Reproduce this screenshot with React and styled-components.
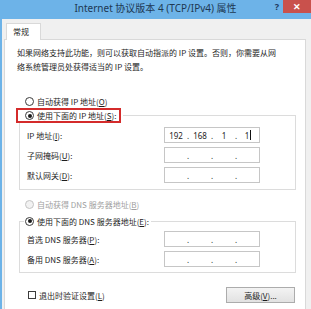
import React from "react";
import styled, { createGlobalStyle } from "styled-components";

const GlobalStyle = createGlobalStyle`
  html, body {
    margin: 0;
    padding: 0;
    background: #f0f0f0;
  }
  body {
    font-family: "Noto Sans CJK SC", "Noto Sans", sans-serif;
    font-size: 8px;
    color: #1e1e1e;
  }
  #root {
    width: 311px;
    height: 309px;
    overflow: hidden;
  }
`;

const Window = styled.div`
  width: 311px;
  height: 309px;
  display: flex;
  flex-direction: column;
  overflow: hidden;
  background: #f0f0f0;
`;

const TitleBar = styled.div`
  flex: none;
  height: 19px;
  display: grid;
  grid-template-columns: 1fr auto 1fr;
  align-items: start;
  background: #6db3e8;
`;

const Title = styled.div`
  grid-column: 2;
  font-family: "Noto Sans", "Noto Sans CJK SC", sans-serif;
  font-size: 10px;
  line-height: 17px;
  color: #203852;
  white-space: nowrap;
`;

const Controls = styled.div`
  grid-column: 3;
  justify-self: end;
  display: flex;
  align-items: flex-start;
`;

const HelpButton = styled.span`
  width: 10px;
  margin-right: 1px;
  font-family: "Noto Sans", sans-serif;
  font-weight: 700;
  font-size: 9px;
  line-height: 14px;
  color: #1d3a5e;
  text-align: center;
`;

const CloseButton = styled.span`
  width: 28px;
  height: 13px;
  background: #c9514c;
  color: #fff;
  font-family: "Noto Sans", sans-serif;
  font-weight: 700;
  font-size: 9px;
  line-height: 13px;
  text-align: center;
`;

const Body = styled.div`
  flex: 1;
  display: flex;
  flex-direction: column;
  border-left: 2px solid #6db3e8;
  padding: 0 5px 0 2px;
  min-height: 0;
`;

const TabStrip = styled.div`
  flex: none;
  height: 20px;
  display: flex;
  align-items: flex-end;
  padding-left: 2px;
`;

const Tab = styled.div`
  position: relative;
  z-index: 1;
  width: 35px;
  height: 17px;
  box-sizing: border-box;
  margin-bottom: -1px;
  padding-left: 6px;
  border: 1px solid #d9d9d9;
  border-bottom: none;
  background: #fff;
  line-height: 16px;
`;

const Panel = styled.div`
  flex: 1;
  background: #fff;
  border: 1px solid #d9d9d9;
  border-bottom: none;
  padding: 6px 9px 0 12px;
`;

const Description = styled.p`
  margin: 0;
  line-height: 14px;
  white-space: nowrap;
`;

const Key = styled.span`
  text-decoration: underline;
`;

const OptionRow = styled.div`
  display: flex;
  align-items: center;
  gap: 3px;
  height: 14px;
  padding-left: 8px;
  margin-top: ${(p) => p.$top || 0}px;
  color: ${(p) => (p.$disabled ? "#a0a0a0" : "inherit")};
`;

const Radio = styled.span`
  flex: none;
  width: 9px;
  height: 9px;
  box-sizing: border-box;
  border-radius: 50%;
  border: 1px solid ${(p) => (p.$disabled ? "#c4c4c4" : "#3c3c3c")};
  background: ${(p) => (p.$disabled ? "#f2f2f2" : "#fff")};
  display: flex;
  align-items: center;
  justify-content: center;

  &::after {
    content: "";
    width: 4px;
    height: 4px;
    border-radius: 50%;
    background: ${(p) => (p.$checked ? "#1a1a1a" : "transparent")};
  }
`;

const Group = styled.fieldset`
  margin: ${(p) => p.$top || 0}px 0 0 2px;
  padding: 0 0 ${(p) => p.$bottom}px 0;
  border: 1px solid #dcdcdc;
  min-width: 0;
`;

const Legend = styled.legend`
  margin-left: 4px;
  padding: 0 2px 0 0;
`;

const LegendOption = styled.span`
  display: flex;
  align-items: center;
  gap: 3px;
  height: ${(p) => (p.$highlight ? 15 : 14)}px;
  box-sizing: border-box;
  background: #fff;
  ${(p) =>
    p.$highlight
      ? `
    border: 2px solid #d42b2b;
    margin-left: -8px;
    padding: 0 3px 0 7px;
  `
      : `
    margin-left: 1px;
  `}
`;

const FieldList = styled.div`
  display: flex;
  flex-direction: column;
  gap: 4px;
  padding-top: ${(p) => p.$top}px;
`;

const FieldRow = styled.div`
  display: flex;
  align-items: center;
  height: 16px;
  padding-left: 7px;
`;

const FieldLabel = styled.span`
  white-space: nowrap;
`;

const AddressBox = styled.div`
  margin-left: auto;
  margin-right: 35px;
  width: 96px;
  height: 16px;
  box-sizing: border-box;
  border: 1px solid #c6c6c6;
  display: flex;
  align-items: center;
  font-family: "Noto Sans", sans-serif;
  font-size: 8px;
`;

const Octet = styled.span`
  flex: 1;
  display: flex;
  justify-content: center;
  align-items: center;
`;

const Dot = styled.span`
  flex: none;
  width: 2px;
  text-align: center;
`;

const Caret = styled.span`
  width: 1px;
  height: 10px;
  background: #111;
  margin-left: 1px;
`;

const Footer = styled.div`
  display: flex;
  align-items: center;
  justify-content: space-between;
  height: 16px;
  margin-top: 14px;
  padding-left: 11px;
  padding-right: 1px;
`;

const CheckOption = styled.label`
  display: flex;
  align-items: center;
  gap: 3px;
`;

const CheckBox = styled.span`
  width: 8px;
  height: 8px;
  box-sizing: border-box;
  border: 1px solid #3c3c3c;
  background: #fff;
`;

const Button = styled.button`
  width: 69px;
  height: 16px;
  padding: 0;
  border: 1px solid #acacac;
  background: linear-gradient(#f3f3f3, #e2e2e2);
  font-family: inherit;
  font-size: 8px;
  color: #1e1e1e;
`;

const AddressField = ({ octets = ["", "", "", ""], caret }) => (
  <AddressBox>
    {octets.map((o, i) => (
      <React.Fragment key={i}>
        {i > 0 && <Dot>.</Dot>}
        <Octet>
          {o}
          {caret && i === 3 && <Caret />}
        </Octet>
      </React.Fragment>
    ))}
  </AddressBox>
);

const App = () => {
  return (
    <>
      <GlobalStyle />
      <Window>
        <TitleBar>
          <Title>Internet 协议版本 4 (TCP/IPv4) 属性</Title>
          <Controls>
            <HelpButton>?</HelpButton>
            <CloseButton>✕</CloseButton>
          </Controls>
        </TitleBar>
        <Body>
          <TabStrip>
            <Tab>常规</Tab>
          </TabStrip>
          <Panel>
            <Description>
              如果网络支持此功能，则可以获取自动指派的 IP 设置。否则，你需要从网
              <br />
              络系统管理员处获得适当的 IP 设置。
            </Description>

            <OptionRow $top={20}>
              <Radio />
              <span>
                自动获得 IP 地址(<Key>O</Key>)
              </span>
            </OptionRow>

            <Group $bottom={6}>
              <Legend>
                <LegendOption $highlight>
                  <Radio $checked />
                  <span>
                    使用下面的 IP 地址(<Key>S</Key>):
                  </span>
                </LegendOption>
              </Legend>
              <FieldList $top={4}>
                <FieldRow>
                  <FieldLabel>
                    IP 地址(<Key>I</Key>):
                  </FieldLabel>
                  <AddressField octets={["192", "168", "1", "1"]} caret />
                </FieldRow>
                <FieldRow>
                  <FieldLabel>
                    子网掩码(<Key>U</Key>):
                  </FieldLabel>
                  <AddressField />
                </FieldRow>
                <FieldRow>
                  <FieldLabel>
                    默认网关(<Key>D</Key>):
                  </FieldLabel>
                  <AddressField />
                </FieldRow>
              </FieldList>
            </Group>

            <OptionRow $top={7} $disabled>
              <Radio $disabled />
              <span>
                自动获得 DNS 服务器地址(<Key>B</Key>)
              </span>
            </OptionRow>

            <Group $top={3} $bottom={5}>
              <Legend>
                <LegendOption>
                  <Radio $checked />
                  <span>
                    使用下面的 DNS 服务器地址(<Key>E</Key>):
                  </span>
                </LegendOption>
              </Legend>
              <FieldList $top={3}>
                <FieldRow>
                  <FieldLabel>
                    首选 DNS 服务器(<Key>P</Key>):
                  </FieldLabel>
                  <AddressField />
                </FieldRow>
                <FieldRow>
                  <FieldLabel>
                    备用 DNS 服务器(<Key>A</Key>):
                  </FieldLabel>
                  <AddressField />
                </FieldRow>
              </FieldList>
            </Group>

            <Footer>
              <CheckOption>
                <CheckBox />
                <span>
                  退出时验证设置(<Key>L</Key>)
                </span>
              </CheckOption>
              <Button>
                高级(<Key>V</Key>)...
              </Button>
            </Footer>
          </Panel>
        </Body>
      </Window>
    </>
  );
};

export default App;
